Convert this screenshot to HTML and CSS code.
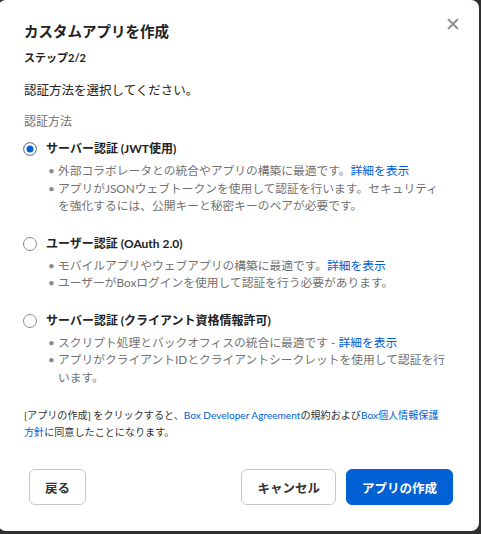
FILE: index.html
```html
<!DOCTYPE html>
<html lang="ja">
<head>
    <meta charset="UTF-8">
    <meta name="viewport" content="width=device-width, initial-scale=1.0">
    <title>カスタムアプリを作成</title>
    <link rel="stylesheet" href="styles.css">
</head>
<body>
    <div class="modal">
        <button class="close-btn" aria-label="閉じる">
            <svg width="12" height="12" viewBox="0 0 12 12">
                <path d="M1 1 L11 11 M11 1 L1 11" stroke="#8f8f8f" stroke-width="1.8" fill="none"/>
            </svg>
        </button>

        <h1>カスタムアプリを作成</h1>
        <div class="step">ステップ2/2</div>

        <p class="intro">認証方法を選択してください。</p>
        <div class="legend">認証方法</div>

        <div class="option">
            <label class="option-label">
                <input type="radio" name="auth" checked>
                <span>サーバー認証 (JWT使用)</span>
            </label>
            <ul class="desc">
                <li>外部コラボレータとの統合やアプリの構築に最適です。<a href="#">詳細を表示</a></li>
                <li>アプリがJSONウェブトークンを使用して認証を行います。セキュリティを強化するには、公開キーと秘密キーのペアが必要です。</li>
            </ul>
        </div>

        <div class="option">
            <label class="option-label">
                <input type="radio" name="auth">
                <span>ユーザー認証 (OAuth 2.0)</span>
            </label>
            <ul class="desc">
                <li>モバイルアプリやウェブアプリの構築に最適です。<a href="#">詳細を表示</a></li>
                <li>ユーザーがBoxログインを使用して認証を行う必要があります。</li>
            </ul>
        </div>

        <div class="option">
            <label class="option-label">
                <input type="radio" name="auth">
                <span>サーバー認証 (クライアント資格情報許可)</span>
            </label>
            <ul class="desc">
                <li>スクリプト処理とバックオフィスの統合に最適です - <a href="#">詳細を表示</a></li>
                <li>アプリがクライアントIDとクライアントシークレットを使用して認証を行います。</li>
            </ul>
        </div>

        <p class="terms">[アプリの作成] をクリックすると、<a href="#">Box Developer Agreement</a>の規約および<a href="#">Box個人情報保護方針</a>に同意したことになります。</p>

        <div class="actions">
            <button class="btn">戻る</button>
            <div class="actions-right">
                <button class="btn">キャンセル</button>
                <button class="btn btn-primary">アプリの作成</button>
            </div>
        </div>
    </div>
</body>
</html>
```

FILE: styles.css
```css
* {
    box-sizing: border-box;
}

body {
    margin: 0;
    background: #2f2f2f;
    font-family: Lato, "Noto Sans CJK JP", sans-serif;
    color: #222;
    overflow: hidden;
}

.modal {
    position: relative;
    width: 481px;
    margin-left: -2px;
    padding: 20px 30px 26px 26px;
    background-color: #fff;
    border-radius: 8px;
}

.close-btn {
    position: absolute;
    top: 18px;
    right: 20px;
    width: 12px;
    height: 12px;
    padding: 0;
    border: none;
    background: none;
    line-height: 0;
    cursor: pointer;
}

h1 {
    margin: 0;
    font-size: 14.5px;
    line-height: 24px;
    font-weight: bold;
}

.step {
    margin-top: 6px;
    font-size: 11px;
    line-height: 16px;
    font-weight: bold;
}

.intro {
    margin: 16px 0 0;
    font-size: 12.5px;
    line-height: 18px;
}

.legend {
    margin-top: 13px;
    font-size: 12px;
    line-height: 18px;
    color: #6f6f6f;
}

/* radio groups */
.option {
    margin-top: 19px;
}

.legend + .option {
    margin-top: 8px;
}

.option-label {
    display: flex;
    align-items: center;
    gap: 9px;
    font-size: 12px;
    line-height: 20px;
    font-weight: bold;
    cursor: pointer;
}

.option-label input {
    appearance: none;
    -webkit-appearance: none;
    width: 14px;
    height: 14px;
    margin: 0 0 0 -1px;
    border: 1px solid #8c8c8c;
    border-radius: 50%;
    background: #fff;
}

.option-label input:checked {
    background: #0061d5;
    box-shadow: inset 0 0 0 2.5px #fff;
}

.desc {
    list-style: none;
    margin: 3px 0 0;
    padding: 0 0 0 34px;
    font-size: 11.75px;
    line-height: 17.5px;
    color: #727272;
}

.desc li {
    position: relative;
}

.desc li::before {
    content: "•";
    position: absolute;
    left: -10px;
    color: #8a8a8a;
}

a {
    color: #0061d5;
    text-decoration: none;
}

.terms {
    margin: 21px 6px 0 0;
    font-size: 10.1px;
    line-height: 17px;
    color: #333;
}

/* footer buttons */
.actions {
    display: flex;
    justify-content: space-between;
    margin: 28px -4px 0 5px;
}

.actions-right {
    display: flex;
    gap: 10px;
}

.btn {
    height: 36px;
    padding: 0 15px;
    border: 1px solid #c8c8c8;
    border-radius: 6px;
    background: #fff;
    font-family: Lato, "Noto Sans CJK JP", sans-serif;
    font-size: 12.5px;
    font-weight: bold;
    color: #333;
    cursor: pointer;
}

.btn-primary {
    border-color: #0061d5;
    background: #0061d5;
    color: #fff;
}
```
